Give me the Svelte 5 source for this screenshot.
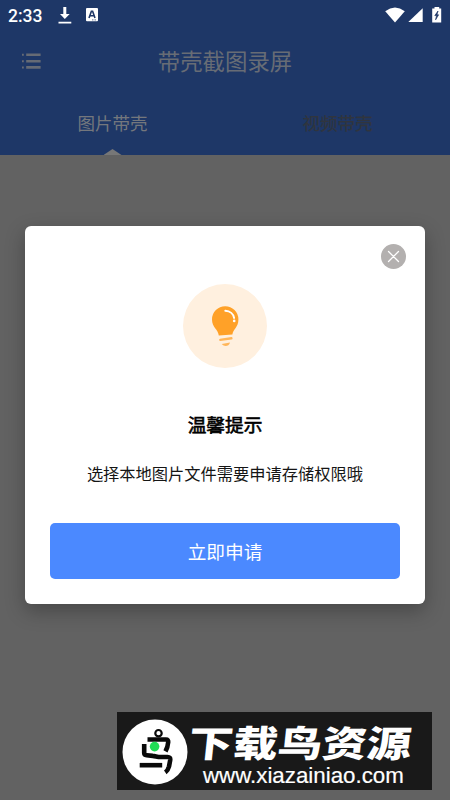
<script>
  const tabs = ['图片带壳', '视频带壳'];
  let active = $state(0);
</script>

<div class="screen">
  <header>
    <div class="status">
      <span class="time">2:33</span>
      <svg class="download" width="14" height="18" viewBox="0 0 14 18"><path d="M5.3 0h3v7h3.4L6.8 12 2 7h3.3zM.5 14.7h12.8v1.7H.5z" fill="#fff" /></svg>
      <svg class="app" width="12" height="14" viewBox="0 0 12 14"><rect width="12" height="13.3" rx="1" fill="#fff" /><path d="M3 10 5.4 3.2h1.2L9 10M4 7.8h4" fill="none" stroke="#1e3767" stroke-width="1.6" /><path d="M6 11.9h4.5" stroke="#1e3767" stroke-width=".7" stroke-dasharray="1 .5" /></svg>
      <span class="grow"></span>
      <svg width="60" height="18" viewBox="0 0 60 18">
        <path d="M.2 4.2Q10-3.1 19.8 4.2L10 15.4z" fill="#fff" />
        <path d="M37.7 1.2v13.9H23.3z" fill="#fff" />
        <path d="M49.5 0h4.7v1.4h2v14h-9v-14h2.3z" fill="#fff" />
        <path d="m53 4-3.2 4.6h1.8l-1 4.2 3-5h-1.7z" fill="#1e3767" stroke="#1e3767" stroke-width=".7" />
      </svg>
    </div>
    <div class="bar">
      <svg width="20" height="17" viewBox="0 0 20 17" fill="#666b75"><path d="M0 .8h1.8v2H0zM4.2 .5H18.6v2.6H4.2zM0 7.2h1.8v2H0zM4.2 6.9H18.6v2.6H4.2zM0 13.4h1.8v2H0zM4.2 13.1H18.6v2.6H4.2z" /></svg>
      <h1>带壳截图录屏</h1>
    </div>
    <nav>
      {#each tabs as tab, i}
        <button class:active={active === i} onclick={() => (active = i)}>{tab}</button>
      {/each}
    </nav>
  </header>

  <main>
    <section class="dialog">
      <button class="close" aria-label="关闭">
        <svg width="25" height="25" viewBox="0 0 25 25"><circle cx="12.5" cy="12.5" r="12.5" fill="#b3b0af" /><path d="m7.5 7.5 10 10m0-10-10 10" stroke="#fff" stroke-width="1.3" stroke-linecap="round" /></svg>
      </button>
      <svg class="bulb" width="84" height="84" viewBox="0 0 84 84">
        <circle cx="42" cy="42" r="42" fill="#fff0df" />
        <path d="M35.8 51.5c-.6-6.3-6.8-8-6.8-16.1a13.2 13.2 0 0 1 26.4 0c0 8-5.4 9.4-6 15.1z" fill="#ffa128" />
        <path d="M42.3 26.8c4.7.3 8.2 3.2 8.8 7.2" fill="none" stroke="#fff" stroke-width="1.9" stroke-linecap="round" />
        <circle cx="51.2" cy="36.9" r="1.3" fill="#fff" />
        <path d="m37.3 55.9 11.1-1.6" stroke="#ffb65a" stroke-width="2.4" stroke-linecap="round" />
        <path d="m38.7 60 8.3-1.6c-1 4-5.7 4.7-8.3 1.6z" fill="#ffb65a" />
      </svg>
      <h2>温馨提示</h2>
      <p>选择本地图片文件需要申请存储权限哦</p>
      <button class="apply">立即申请</button>
    </section>
  </main>

  <aside>
    <svg width="66" height="66" viewBox="0 0 66 66">
      <circle cx="33" cy="33" r="32.5" fill="#fff" />
      <g fill="none" stroke="#090909" stroke-width="4.6">
        <circle cx="36.5" cy="14.2" r="3.2" stroke-width="2.2" />
        <path d="M25.5 20.5H44q2.5 0 2.2 2.6-.4 5-2.7 9.3" />
        <path d="M22.2 25v9q0 2 2.5 2.3l6 .6c3 .2 4.5 1.1 8 1.1h6.8q3.2 0 2.7 3.1l-1.2 6.4q-1 4-3.7 5.8" />
        <path d="M17.7 46.2h22.5" />
      </g>
      <circle cx="32.6" cy="27.6" r="4.8" fill="#20dc55" />
    </svg>
    <div class="brand">
      <strong>下载鸟资源</strong>
      <span>www.xiazainiao.com</span>
    </div>
  </aside>
</div>

<style>
  :global(body) { margin: 0; }
  .screen {
    position: relative; width: 450px; height: 800px; overflow: hidden;
    display: flex; flex-direction: column; background: #626262;
    font-family: "Noto Sans CJK SC", sans-serif;
  }
  button { border: 0; padding: 0; background: none; font: inherit; }
  svg { display: block; flex: none; }
  h1, h2, p { margin: 0; font-weight: 400; white-space: nowrap; }
  header { height: 155px; flex: none; background: #1e3767; }
  .status { height: 32px; box-sizing: border-box; display: flex; align-items: flex-start; padding: 7px 5px 0 8px; }
  .time { width: 50px; font: 500 17.5px/18px Roboto, sans-serif; color: #fff; }
  .app { margin: 1px 0 0 14px; }
  .grow { flex: 1; }
  .bar { height: 58px; display: flex; align-items: center; padding-left: 22px; }
  .bar h1 { flex: 1; padding: 0 42px 2px 0; text-align: center; font-size: 22.4px; line-height: 32px; color: #676c75; }
  nav { height: 65px; display: flex; }
  nav button { position: relative; flex: 1; font-size: 17.5px; line-height: 66px; color: #30353e; -webkit-text-stroke: .25px #30353e; }
  nav .active { color: #74777d; -webkit-text-stroke: 0; }
  nav .active::after {
    content: ""; position: absolute; left: 50%; bottom: 0; width: 18px; height: 6px;
    margin-left: -9px; background: #777; clip-path: polygon(50% 0, 100% 100%, 0 100%);
  }
  main { flex: 1; padding: 71px 25px 0; }
  .dialog {
    height: 378px; display: flex; flex-direction: column; align-items: center;
    position: relative; background: #fff; border-radius: 6px;
    box-shadow: 0 7px 20px rgba(0, 0, 0, .28);
  }
  .close { position: absolute; right: 19px; top: 18px; }
  .bulb { margin-top: 58px; }
  h2 { margin-top: 42px; font-size: 18.7px; line-height: 28px; color: #000; -webkit-text-stroke: .6px #000; }
  p { margin-top: 23px; font-size: 16.25px; line-height: 24px; color: #151515; }
  .apply { width: 350px; height: 56px; margin-top: 38px; border-radius: 5px; background: #4b89ff; color: #fff; font-size: 18.7px; line-height: 56px; }
  aside {
    position: absolute; left: 117px; top: 712px; width: 315px; height: 78px; box-sizing: border-box;
    display: flex; padding: 7px 0 0 5px; background: #191919; color: #fff;
  }
  .brand { display: flex; flex-direction: column; align-items: flex-start; margin-left: 1px; }
  .brand strong {
    height: 45px; font-size: 36.5px; line-height: 46px; font-weight: 900; white-space: nowrap;
    transform: scaleX(1.22) skewX(-5deg); transform-origin: left center;
  }
  .brand span { margin-left: 14px; font: 22.3px/24px "Liberation Sans", sans-serif; -webkit-text-stroke: .2px #fff; }
</style>
